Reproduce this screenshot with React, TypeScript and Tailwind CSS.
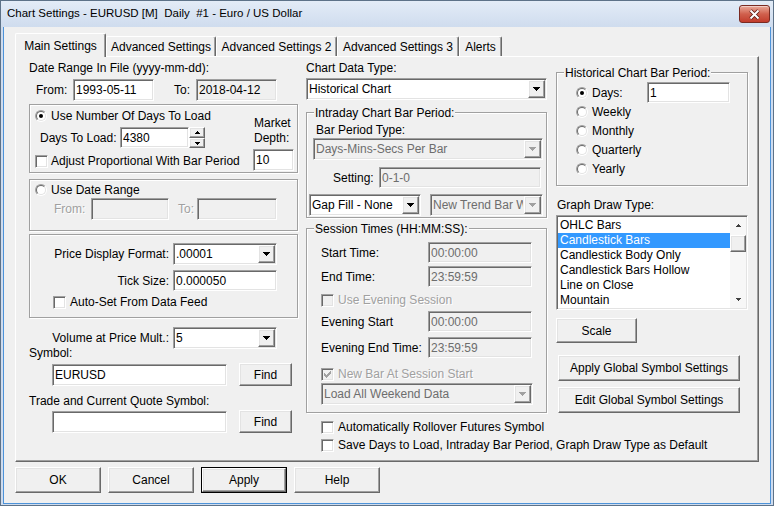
import React from "react";

const sunken =
  "border border-t-[#a0a0a0] border-l-[#a0a0a0] border-b-white border-r-white shadow-[inset_1px_1px_0_#696969,inset_-1px_-1px_0_#e3e3e3]";
const raised =
  "border border-t-white border-l-white border-b-[#696969] border-r-[#696969] shadow-[inset_-1px_-1px_0_#a0a0a0,inset_1px_1px_0_#e3e3e3]";
const etched = "border border-[#a0a0a0] shadow-[inset_1px_1px_0_#fff,1px_1px_0_#fff]";
const dis = "text-[#a0a0a0] [text-shadow:1px_1px_0_#fff]";

function Arrow({ color = "#000", up = false }: { color?: string; up?: boolean }) {
  return (
    <svg width="7" height="4" viewBox="0 0 7 4" className={up ? "rotate-180" : ""}>
      <path d="M0 0h7v1H0zM1 1h5v1H1zM2 2h3v1H2zM3 3h1v1H3z" fill={color} />
    </svg>
  );
}

function Arrow5({ color = "#000", up = false }: { color?: string; up?: boolean }) {
  return (
    <svg width="5" height="3" viewBox="0 0 5 3" className={up ? "rotate-180" : ""}>
      <path d="M0 0h5v1H0zM1 1h3v1H1zM2 2h1v1H2z" fill={color} />
    </svg>
  );
}

function Edit({
  cls,
  value = "",
  disabled,
  readOnly,
}: {
  cls: string;
  value?: string;
  disabled?: boolean;
  readOnly?: boolean;
}) {
  const bg = disabled ? "bg-[#f0f0f0] text-[#6d6d6d]" : readOnly ? "bg-[#f0f0f0]" : "bg-white";
  return (
    <div className={`${sunken} ${cls} ${bg} flex items-center pl-[2px] whitespace-nowrap overflow-hidden shrink-0`}>
      {value}
    </div>
  );
}

function Combo({ cls, value, disabled }: { cls: string; value: string; disabled?: boolean }) {
  return (
    <div
      className={`${sunken} ${cls} flex shrink-0 overflow-hidden ${
        disabled ? "bg-[#f0f0f0] text-[#6d6d6d]" : "bg-white"
      }`}
    >
      <div className="flex-1 min-w-0 pl-[2px] flex items-center whitespace-nowrap overflow-hidden">{value}</div>
      <div className={`${raised} bg-[#f0f0f0] w-[17px] m-[1px] flex items-center justify-center shrink-0`}>
        <Arrow color={disabled ? "#a0a0a0" : "#000"} />
      </div>
    </div>
  );
}

function Btn({ cls, children, def }: { cls: string; children: React.ReactNode; def?: boolean }) {
  if (def) {
    return (
      <div className={`${cls} border border-black shrink-0`}>
        <div className={`${raised} bg-[#f0f0f0] w-full h-full flex items-center justify-center`}>{children}</div>
      </div>
    );
  }
  return (
    <div className={`${raised} ${cls} bg-[#f0f0f0] flex items-center justify-center shrink-0 whitespace-nowrap`}>
      {children}
    </div>
  );
}

function Check({ checked, disabled }: { checked?: boolean; disabled?: boolean }) {
  return (
    <div
      className={`${sunken} w-[13px] h-[13px] ${disabled ? "bg-[#f0f0f0]" : "bg-white"} flex items-center justify-center shrink-0`}
    >
      {checked && (
        <svg width="7" height="7" viewBox="0 0 7 7">
          <path
            d="M6 0h1v1H6zM5 1h2v1H5zM0 2h1v1H0zM4 2h3v1H4zM0 3h2v1H0zM3 3h3v1H3zM0 4h5v1H0zM1 5h3v1H1zM2 6h1v1H2z"
            fill={disabled ? "#a0a0a0" : "#000"}
          />
        </svg>
      )}
    </div>
  );
}

function Radio({ checked }: { checked?: boolean }) {
  return (
    <div className="w-[12px] h-[12px] rounded-full border border-t-[#a0a0a0] border-l-[#a0a0a0] border-b-white border-r-white shrink-0">
      <div className="w-full h-full rounded-full border border-t-[#696969] border-l-[#696969] border-b-[#e3e3e3] border-r-[#e3e3e3] bg-white flex items-center justify-center">
        {checked && <div className="w-[4px] h-[4px] rounded-full bg-black" />}
      </div>
    </div>
  );
}

function Group({ cls, title, children }: { cls: string; title?: string; children?: React.ReactNode }) {
  return (
    <div className={`relative ${etched} ${cls}`}>
      {title && (
        <span className="absolute left-[7px] top-[-7px] px-[1px] bg-[#f0f0f0] leading-[14px] h-[14px] whitespace-nowrap">
          {title}
        </span>
      )}
      {children}
    </div>
  );
}

function Tab({ label, selected, cls }: { label: string; selected?: boolean; cls: string }) {
  return (
    <div
      className={`${cls} ${
        selected ? "h-[24px] relative z-10" : "h-[20px] mb-[1px]"
      } bg-[#f0f0f0] border-t border-l border-r border-t-white border-l-white border-r-[#696969] shadow-[inset_-1px_0_0_#a0a0a0] rounded-t-[2px] flex items-center justify-center whitespace-nowrap shrink-0`}
    >
      {label}
    </div>
  );
}

function Spinner() {
  return (
    <div className="w-[16px] h-[21px] flex flex-col shrink-0">
      <div className={`${raised} bg-[#f0f0f0] h-[11px] flex items-center justify-center`}>
        <Arrow5 up />
      </div>
      <div className={`${raised} bg-[#f0f0f0] h-[10px] flex items-center justify-center`}>
        <Arrow5 />
      </div>
    </div>
  );
}

function RadioRow({ label, checked, children }: { label: string; checked?: boolean; children?: React.ReactNode }) {
  return (
    <div className="h-[19px] flex items-center pl-[19px]">
      <Radio checked={checked} />
      <span className="ml-[4px] w-[55px]">{label}</span>
      {children}
    </div>
  );
}

function TimeRow({ cls, label, value }: { cls: string; label: string; value: string }) {
  return (
    <div className={`${cls} h-[21px] flex items-center`}>
      <span className="ml-[14px] w-[107px] whitespace-nowrap">{label}</span>
      <Edit cls="w-[104px] h-[21px]" value={value} disabled />
    </div>
  );
}

export default function App() {
  const items = [
    "OHLC Bars",
    "Candlestick Bars",
    "Candlestick Body Only",
    "Candlestick Bars Hollow",
    "Line on Close",
    "Mountain",
  ];
  return (
    <div className="w-[774px] h-[506px] overflow-hidden bg-[#cfdcee] border border-[#5d7288] flex flex-col font-['Liberation_Sans',Arial,sans-serif] text-[12px] text-black">
      {/* Title bar */}
      <div className="h-[26px] shrink-0 flex items-center pl-[6px] pr-[3px] bg-gradient-to-b from-[#e3ecf7] to-[#cfdcee]">
        <span className="flex-1 whitespace-pre text-[11.5px]">
          Chart Settings - EURUSD [M]  Daily  #1 - Euro / US Dollar
        </span>
        <div className="w-[31px] h-[18px] rounded-[3px] border border-[#7a2a21] bg-gradient-to-b from-[#e9a99a] via-[#d0604d] to-[#c23b2b] flex items-center justify-center shadow-[inset_0_1px_0_rgba(255,255,255,0.45)]">
          <svg width="13" height="11" viewBox="0 0 13 11">
            <path d="M2.5 1.5L10.5 9.5M10.5 1.5L2.5 9.5" stroke="#5a1a14" strokeWidth="3.6" />
            <path d="M2.5 1.5L10.5 9.5M10.5 1.5L2.5 9.5" stroke="#fff" strokeWidth="2" />
          </svg>
        </div>
      </div>

      {/* Client area */}
      <div className="flex-1 mx-[2px] mb-[1px] border-l border-r border-b border-[#4d93d9] bg-[#f0f0f0] flex flex-col pl-[11px] pt-[6px]">
        {/* Tabs */}
        <div className="h-[24px] flex items-end">
          <Tab cls="w-[91px]" label="Main Settings" selected />
          <Tab cls="w-[110px]" label="Advanced Settings" />
          <Tab cls="w-[121px]" label="Advanced Settings 2" />
          <Tab cls="w-[122px]" label="Advanced Settings 3" />
          <Tab cls="w-[43px]" label="Alerts" />
        </div>

        {/* Tab panel */}
        <div className="mt-[-1px] w-[744px] h-[406px] border border-t-white border-l-white border-r-[#696969] border-b-[#696969] shadow-[inset_-1px_-1px_0_#a0a0a0] flex pl-[13px]">
          {/* Left column */}
          <div className="w-[269px] flex flex-col shrink-0">
            <div className="mt-[3px] h-[16px] leading-[16px] whitespace-nowrap">Date Range In File (yyyy-mm-dd):</div>
            <div className="mt-[3px] h-[22px] flex items-center">
              <span className="ml-[7px] w-[37px]">From:</span>
              <Edit cls="w-[81px] h-[22px]" value="1993-05-11" />
              <span className="ml-[20px] w-[22px]">To:</span>
              <Edit cls="w-[81px] h-[22px]" value="2018-04-12" readOnly />
            </div>

            <Group cls="mt-[3px] h-[69px] flex">
              <div className="w-[218px] flex flex-col pl-[5px]">
                <div className="mt-[3px] h-[16px] flex items-center whitespace-nowrap">
                  <Radio checked />
                  <span className="ml-[4px]">Use Number Of Days To Load</span>
                </div>
                <div className="mt-[3px] h-[21px] flex items-center">
                  <span className="ml-[5px] w-[80px] whitespace-nowrap">Days To Load:</span>
                  <Edit cls="w-[69px] h-[21px]" value="4380" />
                  <Spinner />
                </div>
                <div className="mt-[5px] h-[16px] flex items-center whitespace-nowrap">
                  <Check />
                  <span className="ml-[3px]">Adjust Proportional With Bar Period</span>
                </div>
              </div>
              <div className="ml-[5px] flex flex-col">
                <div className="mt-[11px] h-[15px] leading-[15px] pl-[1px]">Market</div>
                <div className="h-[15px] leading-[15px] pl-[1px]">Depth:</div>
                <Edit cls="mt-[3px] w-[41px] h-[22px]" value="10" />
              </div>
            </Group>

            <Group cls="mt-[6px] h-[52px] flex flex-col pl-[5px]">
              <div className="mt-[2px] h-[16px] flex items-center">
                <Radio />
                <span className="ml-[4px]">Use Date Range</span>
              </div>
              <div className="h-[22px] flex items-center">
                <span className={`ml-[19px] w-[37px] ${dis}`}>From:</span>
                <Edit cls="w-[78px] h-[22px]" disabled />
                <span className={`ml-[9px] w-[19px] ${dis}`}>To:</span>
                <Edit cls="w-[80px] h-[22px]" disabled />
              </div>
            </Group>

            <Group cls="mt-[3px] h-[84px] flex flex-col">
              <div className="mt-[8px] h-[22px] flex items-center">
                <span className="w-[143px] text-right pr-[4px] whitespace-nowrap">Price Display Format:</span>
                <Combo cls="w-[104px] h-[22px]" value=".00001" />
              </div>
              <div className="mt-[5px] h-[21px] flex items-center">
                <span className="w-[143px] text-right pr-[4px]">Tick Size:</span>
                <Edit cls="w-[104px] h-[21px]" value="0.000050" />
              </div>
              <div className="mt-[3px] h-[16px] flex items-center pl-[23px]">
                <Check />
                <span className="ml-[4px]">Auto-Set From Data Feed</span>
              </div>
            </Group>

            <div className="mt-[9px] h-[22px] flex items-center">
              <span className="w-[144px] text-right pr-[4px] whitespace-nowrap">Volume at Price Mult.:</span>
              <Combo cls="w-[104px] h-[22px]" value="5" />
            </div>
            <div className="mt-[-3px] h-[14px] leading-[14px]">Symbol:</div>
            <div className="mt-[3px] h-[23px] flex items-center">
              <Edit cls="ml-[23px] w-[175px] h-[22px]" value="EURUSD" />
              <Btn cls="ml-[12px] w-[53px] h-[23px]">Find</Btn>
            </div>
            <div className="mt-[8px] h-[14px] leading-[14px] whitespace-nowrap">Trade and Current Quote Symbol:</div>
            <div className="mt-[2px] h-[23px] flex items-center">
              <Edit cls="ml-[23px] w-[175px] h-[22px]" />
              <Btn cls="ml-[12px] w-[53px] h-[23px]">Find</Btn>
            </div>
          </div>

          {/* Middle column */}
          <div className="ml-[8px] w-[241px] flex flex-col shrink-0">
            <div className="mt-[3px] h-[16px] leading-[16px]">Chart Data Type:</div>
            <Combo cls="mt-[2px] w-[241px] h-[22px]" value="Historical Chart" />

            <Group title="Intraday Chart Bar Period:" cls="mt-[12px] h-[106px] flex flex-col">
              <div className="mt-[10px] h-[14px] leading-[14px] ml-[9px]">Bar Period Type:</div>
              <Combo cls="mt-[1px] ml-[6px] w-[230px] h-[22px]" value="Days-Mins-Secs Per Bar" disabled />
              <div className="mt-[7px] h-[21px] flex items-center">
                <span className="ml-[26px] w-[46px]">Setting:</span>
                <Edit cls="w-[162px] h-[21px]" value="0-1-0" disabled />
              </div>
              <div className="mt-[6px] h-[22px] flex items-center">
                <Combo cls="ml-[2px] w-[112px] h-[22px]" value="Gap Fill - None" />
                <Combo cls="ml-[9px] w-[113px] h-[22px]" value="New Trend Bar W" disabled />
              </div>
            </Group>

            <Group title="Session Times (HH:MM:SS):" cls="mt-[10px] h-[185px] flex flex-col">
              <TimeRow cls="mt-[13px]" label="Start Time:" value="00:00:00" />
              <TimeRow cls="mt-[3px]" label="End Time:" value="23:59:59" />
              <div className="mt-[5px] h-[16px] flex items-center ml-[14px] whitespace-nowrap">
                <Check disabled />
                <span className={`ml-[4px] ${dis}`}>Use Evening Session</span>
              </div>
              <TimeRow cls="mt-[3px]" label="Evening Start" value="00:00:00" />
              <TimeRow cls="mt-[5px]" label="Evening End Time:" value="23:59:59" />
              <div className="mt-[8px] h-[16px] flex items-center ml-[14px] whitespace-nowrap">
                <Check checked disabled />
                <span className={`ml-[4px] ${dis}`}>New Bar At Session Start</span>
              </div>
              <Combo cls="mt-[1px] ml-[14px] w-[212px] h-[22px]" value="Load All Weekend Data" disabled />
            </Group>

            <div className="mt-[6px] h-[16px] flex items-center ml-[15px] whitespace-nowrap">
              <Check />
              <span className="ml-[4px]">Automatically Rollover Futures Symbol</span>
            </div>
            <div className="mt-[2px] h-[16px] flex items-center ml-[15px] whitespace-nowrap">
              <Check />
              <span className="ml-[4px]">Save Days to Load, Intraday Bar Period, Graph Draw Type as Default</span>
            </div>
          </div>

          {/* Right column */}
          <div className="ml-[9px] w-[192px] flex flex-col shrink-0">
            <Group title="Historical Chart Bar Period:" cls="mt-[15px] h-[114px] flex flex-col pt-[10px]">
              <RadioRow label="Days:" checked>
                <Edit cls="w-[83px] h-[21px]" value="1" />
              </RadioRow>
              <RadioRow label="Weekly" />
              <RadioRow label="Monthly" />
              <RadioRow label="Quarterly" />
              <RadioRow label="Yearly" />
            </Group>

            <div className="mt-[12px] h-[14px] leading-[14px] ml-[1px]">Graph Draw Type:</div>
            <div className={`${sunken} mt-[3px] w-[192px] h-[95px] bg-white flex overflow-hidden`}>
              <div className="flex-1 flex flex-col pt-[2px] pl-[1px] overflow-hidden">
                {items.map((it, i) => (
                  <div
                    key={it}
                    className={`h-[15px] leading-[15px] pl-[2px] whitespace-nowrap shrink-0 ${
                      i === 1 ? "bg-[#3399ff] text-white" : ""
                    }`}
                  >
                    {it}
                  </div>
                ))}
              </div>
              <div className="w-[16px] my-[1px] mr-[1px] flex flex-col bg-[#f7f7f7] shrink-0">
                <div className="h-[17px] flex items-center justify-center">
                  <Arrow5 up color="#404040" />
                </div>
                <div className={`${raised} bg-[#f0f0f0] h-[17px] mt-[1px]`} />
                <div className="flex-1" />
                <div className="h-[17px] flex items-center justify-center">
                  <Arrow5 color="#404040" />
                </div>
              </div>
            </div>

            <Btn cls="mt-[8px] w-[81px] h-[25px]">Scale</Btn>
            <Btn cls="mt-[12px] ml-[2px] w-[182px] h-[26px]">Apply Global Symbol Settings</Btn>
            <Btn cls="mt-[6px] ml-[2px] w-[182px] h-[26px]">Edit Global Symbol Settings</Btn>
          </div>
        </div>

        {/* Bottom buttons */}
        <div className="mt-[5px] flex gap-[7px]">
          <Btn cls="w-[86px] h-[26px]">OK</Btn>
          <Btn cls="w-[86px] h-[26px]">Cancel</Btn>
          <Btn cls="w-[86px] h-[26px]" def>
            Apply
          </Btn>
          <Btn cls="w-[86px] h-[26px]">Help</Btn>
        </div>
      </div>
    </div>
  );
}
